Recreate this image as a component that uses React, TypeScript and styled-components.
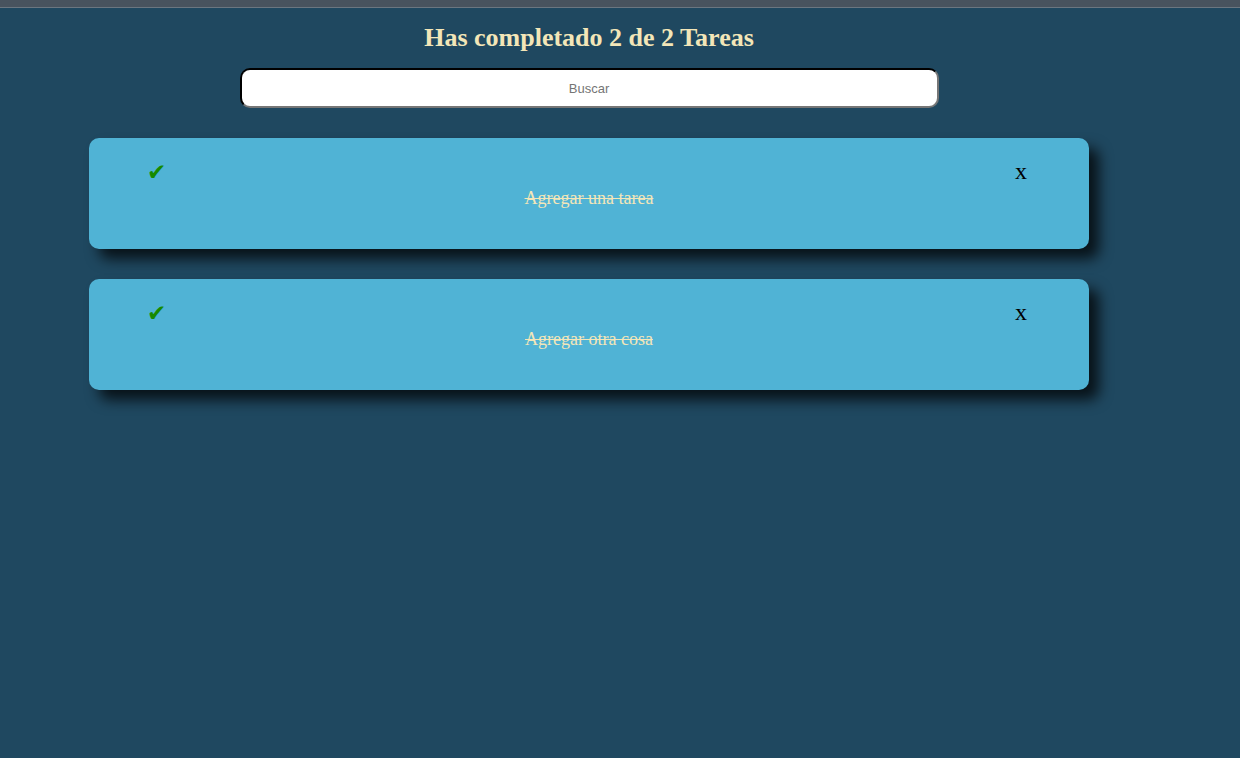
import React from "react";
import styled, { createGlobalStyle } from "styled-components";

const GlobalStyle = createGlobalStyle`
  html, body { margin: 0; padding: 0; }
  body {
    background: #1f4860;
    font-family: "Liberation Serif", "Times New Roman", serif;
    min-height: 758px;
  }
`;

const TopBar = styled.div`
  height: 7px;
  background: #48535e;
  border-bottom: 1px solid #6b7680;
`;

const Main = styled.main`
  width: 1162px;
  margin-left: 8px;
  display: flex;
  flex-direction: column;
  align-items: center;
`;

const Title = styled.h1`
  margin: 14px 0 0;
  font-size: 26px;
  line-height: 32px;
  font-weight: bold;
  color: #f3e6b8;
  text-align: center;
`;

const Search = styled.input`
  box-sizing: border-box;
  margin-top: 14px;
  width: 699px;
  height: 40px;
  border: 2px inset #767676;
  border-top-color: #1a1a1a;
  border-left-color: #1a1a1a;
  border-radius: 10px;
  background: #fff;
  text-align: center;
  font-family: "Liberation Sans", Arial, sans-serif;
  font-size: 13px;
  &::placeholder { color: #757575; }
`;

const List = styled.ul`
  list-style: none;
  margin: 30px 0 0;
  padding: 0;
  display: flex;
  flex-direction: column;
  gap: 30px;
`;

const Card = styled.li`
  box-sizing: border-box;
  width: 1000px;
  height: 111px;
  background: #50b3d5;
  border-radius: 10px;
  box-shadow: 10px 10px 14px rgba(0, 0, 0, 0.75);
  display: grid;
  grid-template-columns: 1fr auto 1fr;
  padding: 20px 60px 0;
`;

const Check = styled.span<{ $done: boolean }>`
  justify-self: start;
  margin-left: -2px;
  font-family: "DejaVu Sans", sans-serif;
  font-size: 23px;
  line-height: 28px;
  color: ${(p) => (p.$done ? "#168a00" : "#777")};
`;

const TaskText = styled.p<{ $done: boolean }>`
  margin: 29px 0 0;
  font-size: 18px;
  line-height: 22px;
  color: #f3e6b8;
  text-decoration: ${(p) => (p.$done ? "line-through" : "none")};
`;

const Close = styled.span`
  justify-self: end;
  margin-right: 2px;
  margin-top: -1px;
  font-size: 24px;
  line-height: 28px;
  color: #000;
`;

const todos = [
  { text: "Agregar una tarea", completed: true },
  { text: "Agregar otra cosa", completed: true },
];

export default function App() {
  const done = todos.filter((t) => t.completed).length;
  return (
    <>
      <GlobalStyle />
      <TopBar />
      <Main>
        <Title>
          Has completado {done} de {todos.length} Tareas
        </Title>
        <Search placeholder="Buscar" />
        <List>
          {todos.map((t) => (
            <Card key={t.text}>
              <Check $done={t.completed}>✔</Check>
              <TaskText $done={t.completed}>{t.text}</TaskText>
              <Close>x</Close>
            </Card>
          ))}
        </List>
      </Main>
    </>
  );
}
